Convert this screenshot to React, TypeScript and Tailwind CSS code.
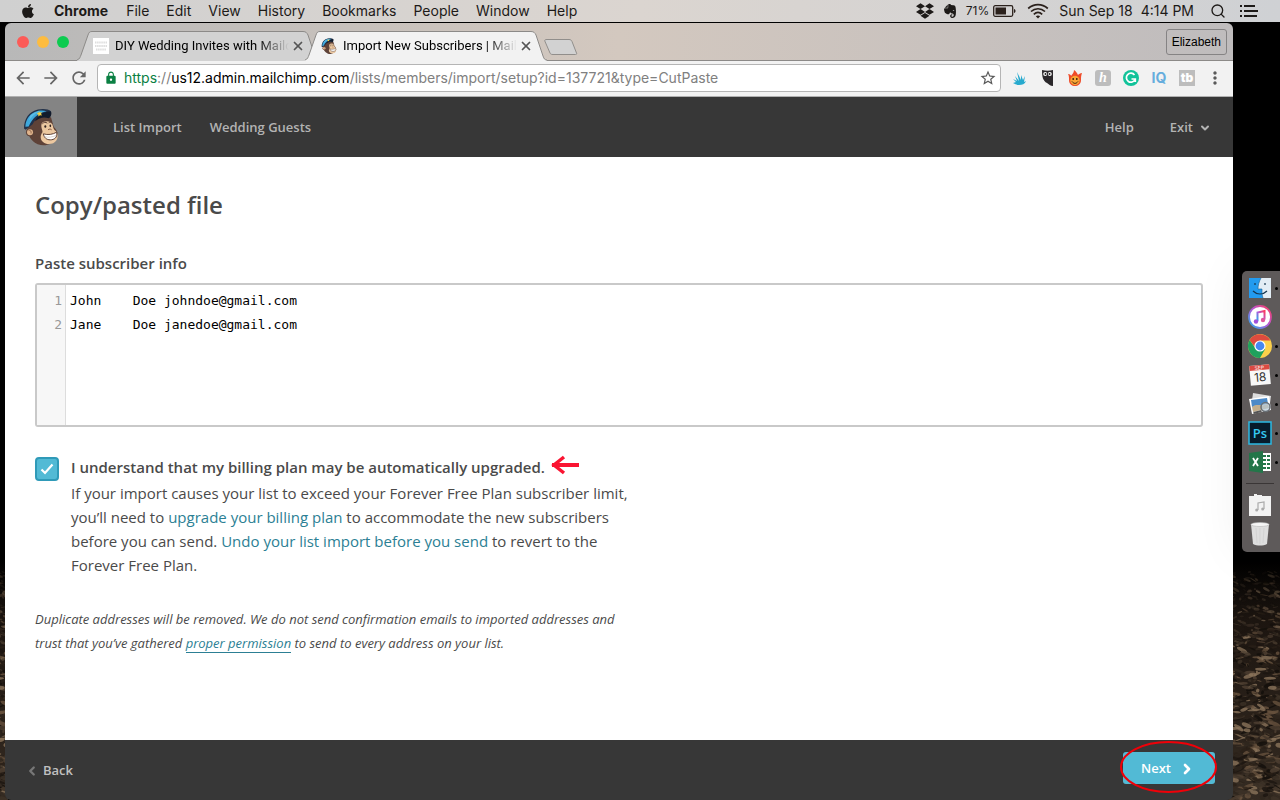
import React from 'react';
import { ChevronDown, ChevronLeft, ChevronRight, Search, X } from 'lucide-react';
import { FaApple, FaDropbox, FaEvernote } from 'react-icons/fa';
import { MdArrowBack, MdArrowForward, MdLock, MdMoreVert, MdRefresh, MdStarBorder } from 'react-icons/md';

const menus = ['File', 'Edit', 'View', 'History', 'Bookmarks', 'People', 'Window', 'Help'];

const chipColors = ['#4f4032', '#2a2018', '#66513d', '#120e0a', '#3f3328', '#8a735a', '#1c1510', '#30271e'];

// small repeatable generator, so the ground looks the same on every load
const makeChips = () => {
  let seed = 7;
  const next = () => {
    seed = (seed * 16807) % 2147483647;
    return seed / 2147483647;
  };
  return Array.from({ length: 800 }, () => {
    const depth = next();
    return {
      x: next() * 60,
      y: 12 + depth * 230,
      rx: 1 + next() * (3 + depth * 5),
      ry: 0.5 + next() * (0.8 + depth * 1.6),
      turn: -25 + next() * 60,
      fill: chipColors[Math.floor(next() * chipColors.length)],
      opacity: 0.25 + Math.min(depth * 1.5, 0.55),
    };
  });
};

const chips = makeChips();

const Ground = ({ className }: { className: string }) => (
  <svg className={className} viewBox="0 0 60 240" preserveAspectRatio="xMaxYMax slice" aria-hidden="true">
    <defs>
      <linearGradient id="soil" x1="0" y1="0" x2="0" y2="1">
        <stop offset="0" stopColor="#000" />
        <stop offset="0.25" stopColor="#1c1510" />
        <stop offset="1" stopColor="#352b22" />
      </linearGradient>
    </defs>
    <rect width="60" height="240" fill="url(#soil)" />
    {chips.map((c, i) => (
      <ellipse
        key={i}
        cx={c.x}
        cy={c.y}
        rx={c.rx}
        ry={c.ry}
        fill={c.fill}
        opacity={c.opacity}
        transform={`rotate(${c.turn} ${c.x} ${c.y})`}
      />
    ))}
  </svg>
);

const Chimp = ({ className }: { className: string }) => (
  <svg className={className} viewBox="0 0 108 111" aria-hidden="true">
    <path d="M14 52C10 72 22 98 44 107c20 8 44 2 56-16 8-14 2-26-8-36L84 26 40 24z" fill="#5e4238" />
    <circle cx="21" cy="71" r="12" fill="#5e4238" />
    <circle cx="21" cy="71" r="9" fill="#e0b48c" />
    <path d="M17 66c5-2 9 2 7 9" fill="none" stroke="#8a5f48" strokeWidth="2.5" />
    <path d="M56 45c6-10 28-9 32 2 3 7 2 12 7 18 10 6 12 20 5 31-8 12-26 14-38 6-10-7-12-20-4-30 3-4-6-15-2-27z" fill="#ecc8a0" />
    <path d="M58 46c4-5 10-6 15-2M77 43c4-3 8-2 10 2" fill="none" stroke="#5e4238" strokeWidth="3" />
    <ellipse cx="67" cy="54" rx="3" ry="4" fill="#32231f" />
    <ellipse cx="82" cy="52" rx="2.5" ry="4" fill="#32231f" />
    <path d="M75 64c4-3 8-3 11 0" fill="none" stroke="#8a5f48" strokeWidth="3" />
    <path d="M61 76c14 4 28 2 40-5 3 17-8 23-19 23-12 0-19-7-21-18z" fill="#fff" stroke="#5e4238" strokeWidth="3" />
    <path d="M64 84c13 4 25 2 36-4" fill="none" stroke="#b8a79a" strokeWidth="1.5" />
    <path d="M3 60C3 31 18 9 45 3c16-4 32-1 39 5l-4 18C57 18 37 31 29 47L8 64z" fill="#223149" />
    <path d="M7 55C8 31 22 13 46 7c9-2 18-1 25 1-24 4-43 20-54 46z" fill="#3fa9dd" />
    <path d="M22 22c8-9 18-13 30-14-16 7-25 15-34 28z" fill="#5cbde6" />
    <path d="M41 29C52 15 72 7 84 9c3 7 0 17-7 20-15-5-27-2-41 9z" fill="#121b2c" />
    <path d="M47 8l4 4 6-1-3 5 3 5-6-1-5 4v-6l-5-3 6-2z" fill="#f3cf43" />
  </svg>
);

const BrowserTab = ({ title, active, icon }: { title: string; active?: boolean; icon: React.ReactNode }) => (
  <button className={`relative h-7.5 w-[242px] text-left ${active ? 'z-10 -ml-3.5' : ''}`}>
    <svg className="absolute inset-0 size-full" viewBox="0 0 242 30" preserveAspectRatio="none" aria-hidden="true">
      <path
        d="M0 29C3 28 3 26 4 24L11 4C12 1 13 .5 15 .5H226C229 .5 230 2 231 4L238 25C239 28 240 29 242 29.5V30H0z"
        fill={active ? '#f2f2f2' : '#d2d2d2'}
      />
      <path
        d="M0 29C3 28 3 26 4 24L11 4C12 1 13 .5 15 .5H226C229 .5 230 2 231 4L238 25C239 28 240 29 242 29"
        fill="none"
        stroke="#8c8a88"
      />
    </svg>
    <span className="relative flex h-7 items-center pl-4">
      {icon}
      <span className="ml-1.5 w-[174px] overflow-hidden font-[Roboto,sans-serif] text-[13px] whitespace-nowrap text-black [mask-image:linear-gradient(to_right,#000_82%,transparent)]">
        {title}
      </span>
      <X className="ml-0.5 size-3.5 text-[#555]" strokeWidth={3} />
    </span>
  </button>
);

const MenuBar = () => (
  <header className="relative z-10 flex h-5.5 items-center bg-linear-to-r from-[#d0d0d0] via-[#dbd5d0] to-[#cfd1d4] pr-5.5 pl-5 font-[Inter,sans-serif] text-sm text-[#1d1a18]">
    <FaApple className="size-4" />
    <nav className="ml-4.5 flex gap-[17px]">
      <a href="#chrome" className="mr-px font-bold">Chrome</a>
      {menus.map((m) => (
        <a key={m} href={`#${m.toLowerCase()}`}>{m}</a>
      ))}
    </nav>
    <div className="ml-auto flex items-center">
      <FaDropbox className="size-4.5" />
      <FaEvernote className="ml-2 size-4" />
      <span className="ml-2 text-xs">71%</span>
      <svg className="ml-1 h-3 w-6" viewBox="0 0 24 12" aria-hidden="true">
        <rect x=".7" y=".7" width="19" height="10.6" rx="1.5" fill="none" stroke="#2b211c" strokeWidth="1.3" />
        <rect x="2.5" y="2.5" width="10.5" height="7" fill="#2b211c" />
        <path d="M21 4c2 .5 2 3.500 0 4z" fill="#2b211c" />
      </svg>
      <svg className="ml-2.5 h-4 w-5.5" viewBox="0 0 22 16" fill="none" stroke="#2b211c" strokeWidth="1.700" aria-hidden="true">
        <path d="M1.200 5.500C7 .3 15 .3 20.800 5.500M4 8.500c4-3.700 10-3.700 14 0M6.800 11.300c2.500-2.200 5.900-2.200 8.400 0" />
        <path d="M11 15.500L8.800 13.200c1.300-1 3.100-1 4.400 0z" fill="#2b211c" stroke="none" />
      </svg>
      <span className="ml-2.5">Sun Sep 18</span>
      <span className="ml-2">4:14 PM</span>
      <Search className="ml-4 size-4" strokeWidth={2} />
      <svg className="ml-3.5 h-3 w-4.5" viewBox="0 0 18 12" aria-hidden="true">
        <path d="M0 1h2M4 1h11M0 6h2M4 6h14M0 11h2M4 11h13" stroke="#1d1a18" strokeWidth="2" />
      </svg>
    </div>
  </header>
);

const Extensions = () => (
  <div className="ml-1 flex items-center font-[Inter,sans-serif]">
    <button className="flex w-7 justify-center" aria-label="Sumo">
      <svg className="size-4" viewBox="0 0 16 16">
        <path d="M2 13l3-1-3-3 4 2-2-5 4 5L6 2l4 8 0-5 2 5 2-4-1 6 2-1c-1 3-4 4-7 4-2 0-4-1-6-2z" fill="#27aace" />
      </svg>
    </button>
    <button className="flex w-7 justify-center" aria-label="Owl">
      <svg className="size-4" viewBox="0 0 16 16">
        <path d="M3 0c4 1 7 1 11 0v16c-3 0-4-2-6-3-4-2-5-6-5-13z" fill="#2b282b" />
        <circle cx="6.200" cy="4" r="2" fill="#fff" /><circle cx="10.800" cy="4" r="2" fill="#fff" />
        <circle cx="6.500" cy="4" r="1" fill="#222" /><circle cx="10.500" cy="4" r="1" fill="#222" />
      </svg>
    </button>
    <button className="flex w-7 justify-center" aria-label="Flame">
      <svg className="size-4" viewBox="0 0 16 16">
        <path d="M2 10c0-3 0-4-1-6 2 0 3 1 3 2 1-2 3-3 3-6 2 1 3 3 4 5 1-1 2-2 4-2-1 3-1 4-1 7 0 4-3 6-6 6s-6-2-6-6z" fill="#ef4d2b" />
        <circle cx="8" cy="10.500" r="4.700" fill="#f9a634" />
        <circle cx="6.200" cy="9" r=".9" fill="#3a1c10" /><circle cx="9.800" cy="9" r=".9" fill="#3a1c10" />
        <path d="M5 11.500c2 2.500 4 2.500 6 0" fill="none" stroke="#3a1c10" />
      </svg>
    </button>
    <button className="flex w-7 justify-center" aria-label="Honey">
      <span className="flex size-4 items-center justify-center rounded-[3px] bg-[#bdbdbd] font-['Liberation_Serif',serif] text-sm leading-4 font-bold text-white italic">h</span>
    </button>
    <button className="flex w-7 justify-center" aria-label="Grammar">
      <svg className="size-4" viewBox="0 0 16 16">
        <circle cx="8" cy="8" r="8" fill="#12c39a" />
        <path d="M11.500 5A4.500 4.500 0 1 0 12 9.500M8.500 9H12.300V12" fill="none" stroke="#fff" strokeWidth="1.700" />
      </svg>
    </button>
    <button className="w-7 text-center text-sm leading-4 font-bold text-[#66addd]">IQ</button>
    <button className="flex w-7 justify-center" aria-label="TubeBuddy">
      <span className="flex size-4 items-center justify-center bg-[#bdbdbd] text-xs leading-4 font-black text-white">tb</span>
    </button>
    <button className="flex w-7 justify-center" aria-label="Browser menu">
      <MdMoreVert className="size-5 text-[#5a5a5a]" />
    </button>
  </div>
);

const BrowserChrome = () => (
  <div>
    <div className="flex h-9.5 items-end bg-linear-to-r from-[#b8b8b8] via-[#d3c8bf] to-[#bfbcbd] shadow-[inset_0_-1px_#8c8a88]">
      <div className="flex gap-2 self-center pl-3">
        <button aria-label="Close window" className="size-3 rounded-full bg-[#fc5b57]" />
        <button aria-label="Minimise window" className="size-3 rounded-full bg-[#fdbc40]" />
        <button aria-label="Zoom window" className="size-3 rounded-full bg-[#0dcb50]" />
      </div>
      <div className="ml-2 flex">
        <BrowserTab
          title="DIY Wedding Invites with Mailchimp"
          icon={
            <svg className="size-4 bg-white" viewBox="0 0 16 16" aria-hidden="true">
              <path d="M2 4.500h12M2 8h12M3 11.500h10" stroke="#dedede" strokeWidth="2" strokeDasharray="1.500 .6" />
            </svg>
          }
        />
        <BrowserTab active title="Import New Subscribers | MailChimp" icon={<Chimp className="size-4" />} />
      </div>
      <button aria-label="New tab" className="-ml-1 mb-1.5">
        <svg className="h-4 w-9" viewBox="0 0 36 16">
          <path d="M4 .5H26C28 .5 28.500 1.500 29 2.500L33.500 14C34 15 33.500 15.500 32.500 15.500H10C8 15.500 7.500 15 7 14L1.800 2C1.500 1 2 .5 4 .5z" fill="#d2d2d2" stroke="#918e8b" />
        </svg>
      </button>
      <button className="mr-1.5 ml-auto h-6.5 self-center rounded-[3px] border border-[#858384] px-[5px] font-['Liberation_Sans',sans-serif] text-xs text-black">
        Elizabeth
      </button>
    </div>
    <div className="flex h-9 items-center border-b border-[#b0b0b0] bg-[#f2f2f2] pr-1 pb-0.5 pl-2">
      <div className="flex gap-2 text-[#666]">
        <button aria-label="Back"><MdArrowBack className="size-5" /></button>
        <button aria-label="Forward"><MdArrowForward className="size-5" /></button>
        <button aria-label="Reload"><MdRefresh className="size-5" /></button>
      </div>
      <div className="ml-2 flex h-7 flex-1 items-center rounded-[4px] border border-[#b5b5b5] bg-white pr-[3px] pl-1.5">
        <MdLock className="size-3.5 text-[#0b8043]" />
        <p className="ml-1.5 flex-1 font-[Inter,sans-serif] text-sm text-[#808080]">
          <span className="text-[#0b8043]">https</span>://<span className="text-black">us12.admin.mailchimp.com</span>/lists/members/import/setup?id=137721&amp;type=CutPaste
        </p>
        <button aria-label="Bookmark this page"><MdStarBorder className="size-4.5 text-[#5a5a5a]" /></button>
      </div>
      <Extensions />
    </div>
  </div>
);

const AppHeader = () => (
  <header className="flex h-15 items-center bg-[#373737] text-[13px] font-semibold text-[#b3b3b3]">
    <a href="#home" aria-label="Home" className="flex h-full w-18 items-center justify-center bg-[#848484]">
      <Chimp className="h-9.5 w-9" />
    </a>
    <nav className="ml-9 flex gap-7 pt-0.5">
      <a href="#import">List Import</a>
      <a href="#guests">Wedding Guests</a>
    </nav>
    <div className="mr-5.5 ml-auto flex gap-9 pt-0.5">
      <a href="#help">Help</a>
      <button className="flex items-center gap-1.5">
        Exit
        <ChevronDown className="size-3" strokeWidth={4} />
      </button>
    </div>
  </header>
);

const ImportForm = () => (
  <main className="flex-1 bg-white px-7.5 pt-7.5 pb-8 text-[#4a4a4a]">
    <h1 className="text-2xl leading-9 font-semibold">Copy/pasted file</h1>
    <label htmlFor="subscribers" className="mt-7 block text-[15px] leading-6 font-semibold">
      Paste subscriber info
    </label>
    <div className="mt-2 flex h-36 rounded-[3px] border-2 border-[#c9c9c9] font-['DejaVu_Sans_Mono',monospace] text-[13px] leading-6">
      <div className="w-[29px] border-r border-[#ddd] bg-[#f7f7f7] pt-1 pr-[3px] text-right text-[#999]">
        <div>1</div>
        <div>2</div>
      </div>
      <textarea
        id="subscribers"
        className="flex-1 resize-none px-1 pt-1 text-black outline-none"
        defaultValue={'John\tDoe johndoe@gmail.com\nJane\tDoe janedoe@gmail.com'}
      />
    </div>
    <div className="mt-7 flex gap-3">
      <span className="relative mt-0.5 size-6">
        <input id="billing" type="checkbox" defaultChecked className="size-6 appearance-none rounded-[4px] border-2 border-[#2f9ab8] bg-[#52bad5]" />
        <svg className="pointer-events-none absolute inset-0 size-6" viewBox="0 0 24 24" aria-hidden="true">
          <path d="M6.500 12.500l3.500 3.500 7.500-8.500" fill="none" stroke="#fff" strokeWidth="2.200" />
        </svg>
      </span>
      <div className="max-w-[570px] text-[15px] leading-6">
        <label htmlFor="billing" className="flex items-start gap-1 font-semibold">
          I understand that my billing plan may be automatically upgraded.
          <svg className="h-5 w-7.5" viewBox="0 0 30 20" fill="none" stroke="#fa1432" aria-hidden="true">
            <path d="M3 10H30" strokeWidth="4" />
            <path d="M15 2L5 10l10 8" strokeWidth="3.500" />
          </svg>
        </label>
        <p className="mt-0.5">
          If your import causes your list to exceed your Forever Free Plan subscriber limit, you’ll need to{' '}
          <a href="#upgrade" className="text-[#2c7f94]">upgrade your billing plan</a> to accommodate the new subscribers
          before you can send. <a href="#undo" className="text-[#2c7f94]">Undo your list import before you send</a> to
          revert to the Forever Free Plan.
        </p>
      </div>
    </div>
    <p className="mt-7.5 max-w-[600px] text-[13px] leading-6 italic">
      Duplicate addresses will be removed. We do not send confirmation emails to imported addresses and trust that
      you’ve gathered <a href="#permission" className="border-b border-[#2c7f94] text-[#2c7f94]">proper permission</a> to
      send to every address on your list.
    </p>
  </main>
);

const AppFooter = () => (
  <footer className="flex h-15 items-start justify-between bg-[#373737] pt-3 pr-4.5 pl-5 text-[13px] font-semibold">
    <button className="flex h-9 items-center gap-1 pt-0.5 text-[#c0c0c0]">
      <ChevronLeft className="size-3.5 text-[#777]" strokeWidth={4} />
      Back
    </button>
    <div className="relative">
      <button className="flex h-8 w-23 items-center gap-2 rounded-[3px] bg-[#52bad5] pt-0.5 pl-4.5 text-white">
        Next
        <ChevronRight className="size-4" strokeWidth={4} />
      </button>
      <svg className="pointer-events-none absolute -top-3 -left-1 h-14 w-25" viewBox="0 0 100 56" aria-hidden="true">
        <ellipse cx="49.500" cy="27" rx="47.500" ry="25" fill="none" stroke="#f00008" strokeWidth="2" />
      </svg>
    </div>
  </footer>
);

const dockIcons = [
  {
    name: 'Finder',
    running: true,
    art: (
      <>
        <path d="M1 2h22v20H1z" fill="#e3edf5" />
        <path d="M1 2h12c-2 4-3 7-3 11h4c0 4 0 6 1 9H1z" fill="#239bef" />
        <path d="M7 7v2M17 7v2M5 15c4 4 10 4 14 0" fill="none" stroke="#163751" strokeWidth="1.200" />
        <path d="M13 2c-2 4-3 7-3 11h4c0 4 0 6 1 9" fill="none" stroke="#1c5f92" strokeWidth=".6" />
      </>
    ),
  },
  {
    name: 'iTunes',
    art: (
      <>
        <circle cx="12" cy="12" r="11" fill="#fff" stroke="url(#tunes)" strokeWidth="1.800" />
        <path d="M9.500 16V7.500l7-1.500v8.500" fill="none" stroke="url(#tunes)" strokeWidth="2" />
        <circle cx="8" cy="16.500" r="2.200" fill="#a150dc" /><circle cx="15" cy="15" r="2.200" fill="#e0569d" />
      </>
    ),
  },
  {
    name: 'Chrome',
    running: true,
    art: (
      <>
        <circle cx="12" cy="12" r="12" fill="#fcd04b" />
        <path d="M1.600 6A12 12 0 0 0 12 24l5.200-9H8z" fill="#1fa15d" />
        <path d="M1.600 6A12 12 0 0 1 22.400 6.500H12L7 13z" fill="#dd4b3e" />
        <circle cx="12" cy="12" r="5.600" fill="#fff" /><circle cx="12" cy="12" r="4.400" fill="#4688f1" />
      </>
    ),
  },
  {
    name: 'Calendar',
    running: true,
    art: (
      <g transform="rotate(-5 12 12)">
        <path d="M2 2h20v20H2z" fill="#f8f8f8" />
        <path d="M2 2h20v5H2z" fill="#dc4a42" />
        <text x="12" y="6.500" textAnchor="middle" fontSize="5" fill="#fff" fontFamily="Inter, sans-serif">SEP</text>
        <text x="12" y="18.500" textAnchor="middle" fontSize="12" fill="#333" fontFamily="Inter, sans-serif">18</text>
      </g>
    ),
  },
  {
    name: 'Preview',
    running: true,
    art: (
      <>
        <path d="M5 1l18 3-2 14-18-2z" fill="#ddd" />
        <path d="M1 7l20-3 2 14-19 4z" fill="#fff" />
        <path d="M3 8l16-2 1 6-16 3z" fill="#4c8ac8" /><path d="M4 15c5-4 9 0 16-3l1 4-16 4z" fill="#c3ae8c" />
        <circle cx="17.500" cy="15" r="4.500" fill="#b7cbd8" fillOpacity=".7" stroke="#6a7076" strokeWidth="1.500" />
        <path d="M13.500 19l-8 2" stroke="#555" strokeWidth="2" />
      </>
    ),
  },
  {
    name: 'Photoshop',
    running: true,
    art: (
      <>
        <path d="M1 1h22v22H1z" fill="#071b2b" stroke="#2bb9e4" strokeWidth="1.500" />
        <text x="12" y="16.500" textAnchor="middle" fontSize="13" fontWeight="600" fill="#35c8f2" fontFamily="Open Sans, sans-serif">Ps</text>
      </>
    ),
  },
  {
    name: 'Excel',
    running: true,
    art: (
      <>
        <path d="M13 3h10v18H13z" fill="#fff" />
        <path d="M15 5h3v2h-3zM19 5h3v2h-3zM15 9h3v2h-3zM19 9h3v2h-3zM15 13h3v2h-3zM19 13h3v2h-3zM15 17h3v2h-3zM19 17h3v2h-3z" fill="#237649" />
        <path d="M1 3l14-2v22L1 21z" fill="#237649" />
        <path d="M5 8l5 8M10 8l-5 8" stroke="#fff" strokeWidth="1.800" />
      </>
    ),
  },
];

const DockItem = ({ name, running, art }: { name: string; running?: boolean; art: React.ReactNode }) => (
  <button aria-label={name} className="flex w-full items-center gap-0.5 pl-[5px]">
    <svg className="h-6 w-6.5" viewBox="0 0 24 24">{art}</svg>
    {running && <span className="size-[3px] rounded-full bg-black" />}
  </button>
);

const Dock = () => (
  <aside className="flex w-9.5 flex-col gap-[5px] rounded-l-[5px] bg-[#5e5a5a] pt-[5px] pb-1.5 shadow-[0_0_50px_rgba(0,0,0,0.08)]">
    <svg className="absolute size-0" aria-hidden="true">
      <linearGradient id="tunes" x1="0" y1="1" x2="1" y2="0">
        <stop offset="0" stopColor="#21b1ed" /><stop offset=".5" stopColor="#b258d8" /><stop offset="1" stopColor="#ff3c5c" />
      </linearGradient>
    </svg>
    {dockIcons.map((d) => (
      <DockItem key={d.name} {...d} />
    ))}
    <hr className="my-1 mr-1.5 ml-1 border-[#3a3636]" />
    <DockItem
      name="Music stack"
      art={
        <>
          <path d="M1 3h5V1h3v1h5v1h9v20H1z" fill="#f2f2f2" />
          <path d="M10 17v-7l6-1v7" fill="none" stroke="#aaa" strokeWidth="1.200" />
          <circle cx="8.700" cy="17" r="1.500" fill="#aaa" /><circle cx="14.700" cy="16" r="1.500" fill="#aaa" />
        </>
      }
    />
    <DockItem
      name="Trash"
      art={
        <>
          <path d="M3 2h18l-2 20c-4 2-10 2-14 0z" fill="#dedede" />
          <ellipse cx="12" cy="2.500" rx="9" ry="2" fill="#f6f6f6" stroke="#b5b5b5" strokeWidth=".6" />
          <path d="M8 6l1 15M12 6v16M16 6l-1 15" stroke="#d3d3d3" />
        </>
      }
    />
  </aside>
);

const App = () => {
  return (
    <div className="relative flex min-h-screen flex-col overflow-hidden bg-black font-['Open_Sans',sans-serif]">
      <Ground className="absolute right-0 bottom-0 h-60 w-15" />
      <Ground className="absolute bottom-0 left-0 h-60 w-2" />
      <MenuBar />
      <div className="relative flex flex-1 pt-px pl-[5px]">
        <div className="flex flex-1 flex-col overflow-hidden rounded-md">
          <BrowserChrome />
          <AppHeader />
          <ImportForm />
          <AppFooter />
        </div>
        <div className="relative flex w-[47px] items-center justify-end">
          <Dock />
        </div>
      </div>
    </div>
  );
};

export default App;
